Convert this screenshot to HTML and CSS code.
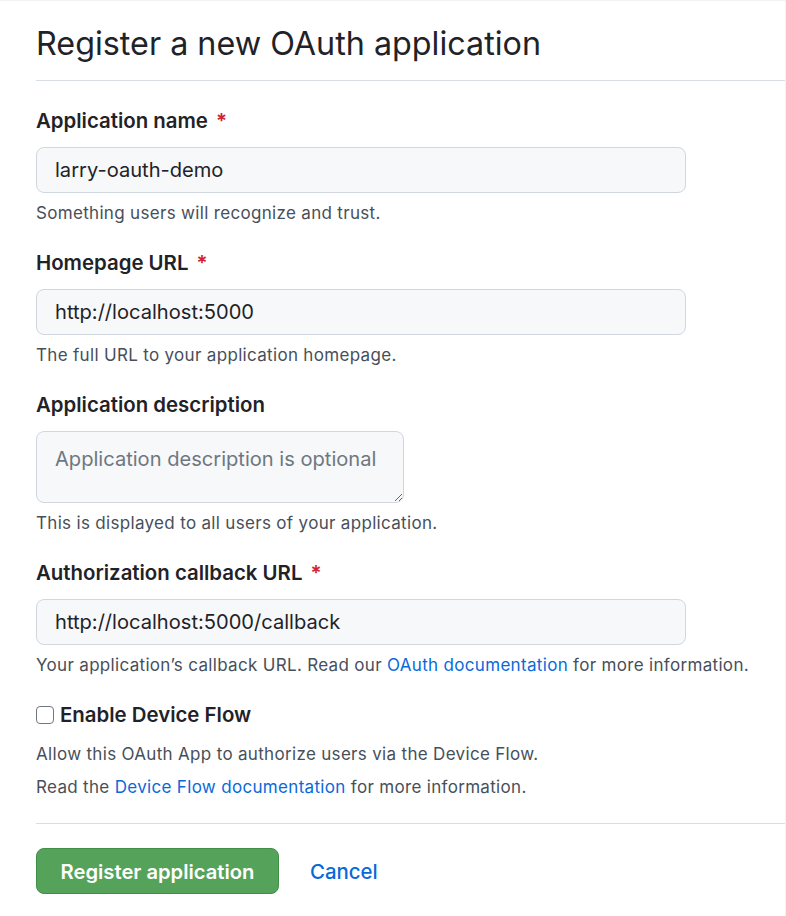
FILE: index.html
```html
<!DOCTYPE html>
<html lang="en">
<head>
<meta charset="utf-8">
<title>Register a new OAuth application</title>
<link rel="stylesheet" href="styles.css">
</head>
<body>
<div class="page">
  <div class="subhead">
    <h2 class="subhead-heading">Register a new OAuth application</h2>
  </div>
  <form class="oauth-form">
    <div class="form-group">
      <label class="form-label" for="app-name">Application name <span class="req">*</span></label>
      <input class="form-control" id="app-name" type="text" value="larry-oauth-demo">
      <p class="note">Something users will recognize and trust.</p>
    </div>
    <div class="form-group">
      <label class="form-label" for="app-url">Homepage URL <span class="req">*</span></label>
      <input class="form-control" id="app-url" type="text" value="http://localhost:5000">
      <p class="note">The full URL to your application homepage.</p>
    </div>
    <div class="form-group">
      <label class="form-label" for="app-desc">Application description</label>
      <textarea class="form-control textarea" id="app-desc" placeholder="Application description is optional"></textarea>
      <p class="note">This is displayed to all users of your application.</p>
    </div>
    <div class="form-group">
      <label class="form-label" for="app-cb">Authorization callback URL <span class="req">*</span></label>
      <input class="form-control" id="app-cb" type="text" value="http://localhost:5000/callback">
      <p class="note">Your application’s callback URL. Read our <a class="link" href="#">OAuth documentation</a> for more information.</p>
    </div>
    <div class="check-row">
      <input class="checkbox" id="device-flow" type="checkbox">
      <label class="check-label" for="device-flow">Enable Device Flow</label>
    </div>
    <p class="note note-allow">Allow this OAuth App to authorize users via the Device Flow.</p>
    <p class="note note-read">Read the <a class="link" href="#">Device Flow documentation</a> for more information.</p>
    <div class="actions">
      <button class="btn-primary" type="button">Register application</button>
      <a class="cancel" href="#">Cancel</a>
    </div>
  </form>
</div>
</body>
</html>
```

FILE: styles.css
```css
* { box-sizing: border-box; }

html, body {
  margin: 0;
  padding: 0;
  background: #ffffff;
}

body {
  font-family: Inter, "Liberation Sans", sans-serif;
  color: #1f2328;
}

.page {
  min-height: 916px;
  padding-left: 36px;
  border-top: 1px solid #f2f2f2;
  border-right: 1px solid #f2f2f2;
}

.subhead {
  padding-top: 22px;
  padding-bottom: 16px;
  border-bottom: 1px solid #d8dee4;
}

.subhead-heading {
  margin: 0;
  font-size: 32.3px;
  line-height: 41px;
  font-weight: 400;
  color: #1f2328;
}

.oauth-form {
  padding-top: 25px;
}

.form-group {
  margin-bottom: 23px;
}

.form-label {
  display: block;
  font-size: 20.4px;
  line-height: 30px;
  font-weight: 600;
  color: #1f2328;
  margin-bottom: 11px;
}

.req {
  color: #cf222e;
  margin-left: 3px;
}

.form-control {
  display: block;
  width: 650px;
  height: 46px;
  padding: 0 18px;
  font-family: Inter, "Liberation Sans", sans-serif;
  font-size: 20.1px;
  color: #1f2328;
  background: #f6f8fa;
  border: 1px solid #d0d7de;
  border-radius: 8px;
  outline: none;
}

.textarea {
  width: 368px;
  height: 72px;
  padding: 12px 18px;
  line-height: 30px;
  resize: both;
}

.textarea::placeholder {
  color: #6e7781;
}

.note {
  margin: 8px 0 0;
  font-size: 17px;
  line-height: 24px;
  letter-spacing: 0.32px;
  color: #474f5a;
}

.link {
  color: #0969da;
  text-decoration: none;
}

.check-row {
  display: flex;
  align-items: center;
  height: 30px;
  gap: 6px;
}

.checkbox {
  appearance: none;
  -webkit-appearance: none;
  margin: 0;
  width: 18px;
  height: 18px;
  border: 1px solid #6e7781;
  border-radius: 4px;
  background: #ffffff;
}

.check-label {
  font-size: 20.4px;
  line-height: 30px;
  font-weight: 600;
  color: #1f2328;
}

.note-allow {
  margin-top: 12px;
}

.note-read {
  margin-top: 9px;
}

.actions {
  margin-top: 24px;
  border-top: 1px solid #d8dee4;
  padding-top: 24px;
  display: flex;
  align-items: center;
  gap: 31px;
}

.btn-primary {
  width: 243px;
  height: 46px;
  font-family: Inter, "Liberation Sans", sans-serif;
  font-size: 20.2px;
  font-weight: 600;
  color: #ffffff;
  background: #55a35a;
  border: 1px solid #3f8f45;
  border-radius: 8px;
  padding: 0;
}

.cancel {
  font-size: 20.4px;
  font-weight: 500;
  color: #0969da;
  text-decoration: none;
}
```
